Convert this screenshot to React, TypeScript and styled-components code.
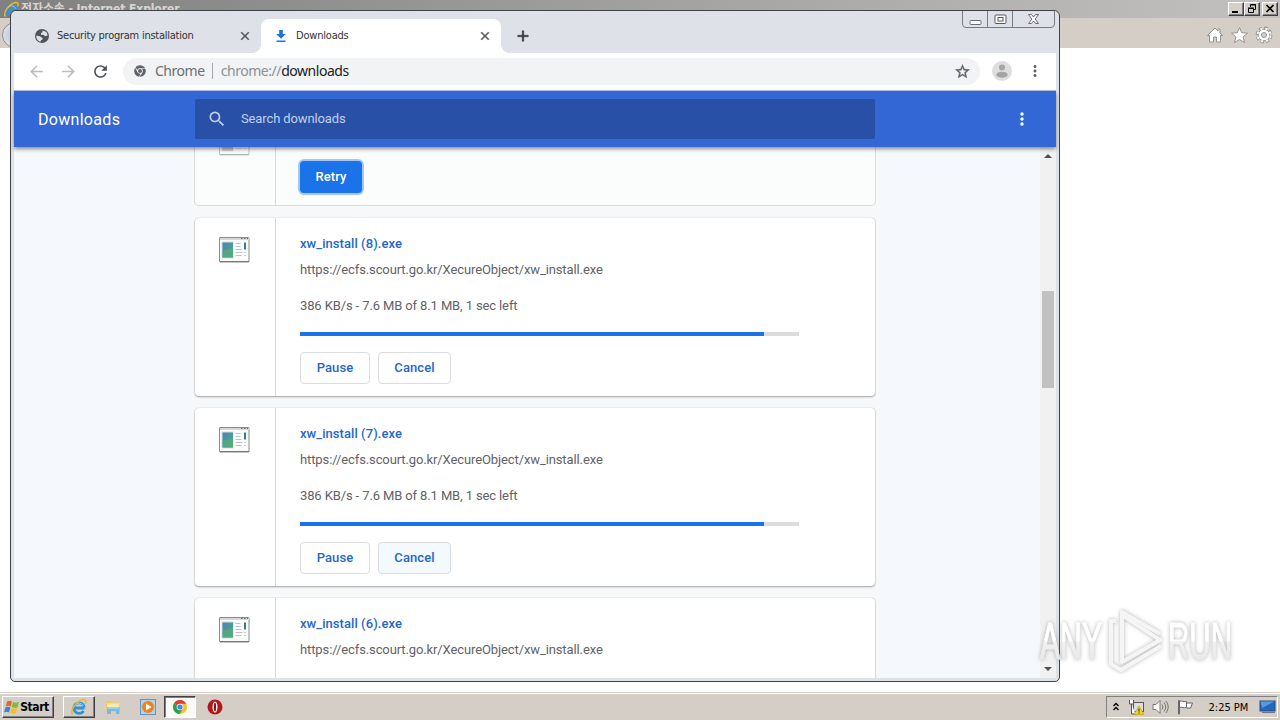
import React from 'react'
import styled, { createGlobalStyle, css } from 'styled-components'
import { FaChrome } from 'react-icons/fa'
import {
  MdAdd,
  MdArrowBack,
  MdArrowForward,
  MdClose,
  MdMoreVert,
  MdRefresh,
  MdSearch,
  MdStarBorder,
} from 'react-icons/md'

const GlobalStyle = createGlobalStyle`
  * { box-sizing: border-box; }
  body {
    margin: 0;
    overflow: hidden;
    font-family: Roboto, "Liberation Sans", sans-serif;
  }
  /* material icons carry an invisible bounding path */
  path[fill="none"] { stroke: none; }
`

const tahoma = '"DejaVu Sans Condensed", "DejaVu Sans", sans-serif'

const Desktop = styled.div`
  position: relative;
  width: 1280px;
  height: 720px;
  display: flex;
  flex-direction: column;
  overflow: hidden;
  background: #fff;
`

/* Internet Explorer, in the back */

const ExplorerTitle = styled.div`
  height: 18px;
  flex: none;
  display: flex;
  align-items: center;
  padding: 0 2px 0 3px;
  background: linear-gradient(90deg, #808080, #c2c1bf);
`

const ExplorerName = styled.span`
  flex: 1;
  margin-left: 1px;
  font: bold 12px/18px ${tahoma}, "Noto Sans CJK KR";
  letter-spacing: -0.1px;
  color: #d8d5cd;
  white-space: nowrap;
`

const ClassicButton = styled.div<{ $gap?: number }>`
  width: 16px;
  height: 14px;
  margin-left: ${({ $gap = 0 }) => $gap}px;
  background: #d4d0c8;
  border: 1px solid;
  border-color: #fff #404040 #404040 #fff;
  box-shadow: inset -1px -1px #808080;

  svg { display: block; }
`

const ExplorerBar = styled.div`
  height: 30px;
  flex: none;
  display: flex;
  align-items: center;
  justify-content: flex-end;
  gap: 6px;
  padding: 4px 7px 0 2px;
  background: #d4cec7;
`

const BackOrb = styled.div`
  width: 26px;
  height: 26px;
  margin-right: auto;
  border-radius: 50%;
  border: 1px solid #8b9097;
  background: radial-gradient(#b4c0cb, #e8edf2);
`

const ExplorerPage = styled.div`
  flex: 1;
  background: #fff;
`

/* Chrome window */

const Window = styled.div`
  position: absolute;
  left: 10px;
  top: 10px;
  width: 1050px;
  height: 672px;
  display: flex;
  flex-direction: column;
  padding: 0 3px 3px;
  border: 1px solid #404247;
  border-radius: 6px 6px 5px 5px;
  background: #dee1e6;
  overflow: hidden;
`

const TabStrip = styled.div`
  height: 42px;
  flex: none;
  display: flex;
  align-items: flex-end;
  padding-left: 7px;
  background: #dee1e8;
`

const TabBox = styled.div<{ $active?: boolean }>`
  position: relative;
  width: 240px;
  height: 34px;
  display: flex;
  align-items: center;
  padding: 0 9px 0 13px;
  border-radius: 8px 8px 0 0;
  font: 11px/14px ${tahoma};
  color: #303236;

  ${({ $active }) => $active && css`
    background: #fff;

    &::before,
    &::after {
      content: '';
      position: absolute;
      bottom: 0;
      width: 8px;
      height: 8px;
    }
    &::before {
      left: -8px;
      background: radial-gradient(circle at 0 0, transparent 7.5px, #fff 8px);
    }
    &::after {
      right: -8px;
      background: radial-gradient(circle at 100% 0, transparent 7.5px, #fff 8px);
    }
  `}
`

const TabTitle = styled.span<{ $spacing: number }>`
  flex: 1;
  margin: 0 0 0 7px;
  letter-spacing: ${({ $spacing }) => $spacing}px;
  white-space: nowrap;
`

const CloseIcon = styled(MdClose)`
  color: #55585c;
  stroke: currentColor;
  stroke-width: 0.8px;
`

const NewTab = styled.div`
  height: 34px;
  display: flex;
  align-items: center;
  margin-left: 13px;
  color: #35383c;

  svg {
    stroke: currentColor;
    stroke-width: 0.7px;
  }
`

const WindowButtons = styled.div`
  align-self: flex-start;
  display: flex;
  margin: -1px 1px 0 auto;
  height: 18px;
  border: 1px solid #777b83;
  border-radius: 0 0 4px 4px;
`

const WindowButton = styled.div<{ $width: number }>`
  width: ${({ $width }) => $width}px;
  display: flex;
  align-items: center;
  justify-content: center;

  & + & { border-left: 1px solid #777b83; }
`

const Toolbar = styled.div`
  height: 38px;
  flex: none;
  display: flex;
  align-items: center;
  padding: 0 12px 1px 13px;
  color: #5f6368;
  background: #fff;
  border-bottom: 1px solid #b6c6e6;
`

const NavButton = styled.div<{ $disabled?: boolean }>`
  width: 32px;
  display: flex;
  color: ${({ $disabled }) => ($disabled ? '#babcbe' : '#4c4f53')};
`

const Omnibox = styled.div`
  width: 858px;
  height: 27px;
  display: flex;
  align-items: center;
  padding: 0 9px 0 11px;
  border-radius: 14px;
  background: #f1f3f5;
  font: 14px/20px "Noto Sans", "Open Sans", sans-serif;

  > svg:last-child {
    stroke: currentColor;
    stroke-width: 0.5px;
  }
`

const OmniLabel = styled.span`
  margin-left: 9px;
  padding-right: 7px;
  border-right: 1px solid #a4a7aa;
  line-height: 16px;
  letter-spacing: -0.45px;
  color: #6b6f73;
`

const OmniUrl = styled.span`
  flex: 1;
  margin-left: 8px;
  letter-spacing: -0.45px;
  color: #8c9196;

  b {
    font-weight: 400;
    color: #202124;
  }
`

const Avatar = styled.div`
  display: flex;
  margin: 0 14px 0 12px;
`

/* Downloads page */

const PageHeader = styled.header`
  position: relative;
  z-index: 1;
  height: 56px;
  flex: none;
  display: flex;
  align-items: center;
  padding: 0 24px;
  background: #3367d6;
  color: #fff;
  box-shadow: 0 2px 4px rgba(0, 0, 0, 0.45);
`

const PageTitle = styled.h1`
  width: 157px;
  margin: 0;
  font-size: 16px;
  font-weight: 400;
  letter-spacing: 0.3px;
`

const SearchField = styled.div`
  width: 680px;
  height: 40px;
  display: flex;
  align-items: center;
  padding: 0 12px;
  border-radius: 2px;
  background: #2950a7;
  color: #c1cfee;
  font-size: 13px;
  letter-spacing: -0.12px;

  span { margin: 0 0 2px 14px; }
`

const HeaderMenu = styled.div`
  display: flex;
  margin-left: auto;
`

const PageBody = styled.div`
  flex: 1;
  min-height: 0;
  display: flex;
  justify-content: space-between;
  overflow: hidden;
  background: #f5f8fc;
`

const List = styled.main`
  width: 690px;
  margin: -36px 0 0 176px;
  padding: 0 5px;
  background: #f7f8f9;
`

const Card = styled.section<{ $stopped?: boolean }>`
  display: flex;
  height: ${({ $stopped }) => ($stopped ? 94 : 178)}px;
  margin-bottom: ${({ $stopped }) => ($stopped ? 13 : 12)}px;
  border-radius: 4px;
  background: ${({ $stopped }) => ($stopped ? '#fbfdfd' : '#fff')};
  box-shadow: ${({ $stopped }) => ($stopped
    ? '0 0 0 1px #d9dddd'
    : '0 1px 2px rgba(60, 64, 67, 0.45), 0 0 1px rgba(60, 64, 67, 0.35)')};
`

const CardIcon = styled.div<{ $faded?: boolean }>`
  width: 81px;
  padding: 19px 0 0 24px;
  border-right: 1px solid #d9dbdb;

  svg {
    display: block;
    opacity: ${({ $faded }) => ($faded ? 0.5 : 1)};
    filter: ${({ $faded }) => ($faded ? 'grayscale(1)' : 'none')};
  }
`

const CardContent = styled.div`
  display: flex;
  flex-direction: column;
  padding: 16px 0 12px 24px;
  font-size: 13px;
  line-height: 20px;
  color: #5f6368;
  white-space: nowrap;
`

const FileName = styled.div`
  font-weight: 500;
  letter-spacing: 0.06px;
  color: #2467cb;
`

const FileUrl = styled.div`
  margin-top: 6px;
  letter-spacing: -0.11px;
`

const Status = styled.div`
  margin-top: 16px;
  letter-spacing: -0.12px;
`

const Progress = styled.div`
  width: 499px;
  height: 4px;
  margin-top: 16px;
  background: #dcdcdc;
`

const ProgressFill = styled.div`
  height: 4px;
  background: #1a73e8;
`

const Actions = styled.div`
  display: flex;
  gap: 8px;
  margin-top: auto;
`

const Button = styled.button<{ $width: number; $primary?: boolean; $hover?: boolean }>`
  width: ${({ $width }) => $width}px;
  height: 32px;
  padding: 0 0 2px;
  border: 1px solid #dadce0;
  border-radius: 4px;
  background: ${({ $hover }) => ($hover ? '#f4f9fe' : '#fff')};
  color: #2467cb;
  font: 500 13px Roboto, sans-serif;
  letter-spacing: 0.1px;

  ${({ $primary }) => $primary && css`
    border: 0;
    background: #1a73e8;
    color: #fff;
    box-shadow: 0 0 0 2px #a3c7f6;
  `}
`

const ScrollTrack = styled.div`
  width: 16px;
  display: flex;
  flex-direction: column;
  align-items: center;
  padding: 7px 0;
  background: #f1f1f1;
`

const ScrollThumb = styled.div`
  width: 12px;
  height: 97px;
  margin: 133px 0 auto;
  background: #c1c1c1;
`

const ScrollArrow = styled.div<{ $down?: boolean }>`
  border: 4px solid transparent;
  border-top-width: ${({ $down }) => ($down ? 4 : 0)}px;
  border-bottom-width: ${({ $down }) => ($down ? 0 : 4)}px;
  border-top-color: #505050;
  border-bottom-color: #505050;
`

/* Taskbar */

const Taskbar = styled.footer`
  height: 28px;
  flex: none;
  display: flex;
  align-items: center;
  padding: 1px 2px 0;
  border-top: 1px solid #d4d0c8;
  background: #d4cec7;
  box-shadow: inset 0 1px #fff;
`

const TaskButton = styled.div<{ $width: number; $look?: 'raised' | 'pressed' }>`
  width: ${({ $width }) => $width}px;
  height: 22px;
  display: flex;
  align-items: center;
  justify-content: center;
  border: 1px solid transparent;

  ${({ $look }) => $look === 'raised' && css`
    border-color: #fff #404040 #404040 #fff;
    box-shadow: inset -1px -1px #808080;
  `}
  ${({ $look }) => $look === 'pressed' && css`
    border-color: #404040 #fff #fff #404040;
    box-shadow: inset 1px 1px #808080;
    background: #fbfaf9;
  `}
`

const StartButton = styled(TaskButton)`
  margin-right: 9px;
  padding-right: 3px;
  font: bold 12px ${tahoma};
  letter-spacing: -0.4px;
  color: #000;
`

const Tray = styled.div`
  height: 22px;
  width: 172px;
  display: flex;
  align-items: center;
  margin-left: auto;
  padding: 0 1px 0 5px;
  border: 1px solid;
  border-color: #808080 #fff #fff #808080;
`

const TrayIcons = styled.div`
  display: flex;
  align-items: center;
  gap: 7.5px;
`

const Clock = styled.span`
  flex: 1;
  margin-left: 16px;
  font: 11px ${tahoma};
  color: #000;
  white-space: nowrap;
`

const Watermark = styled.svg`
  position: absolute;
  left: 1030px;
  top: 602px;
  filter: drop-shadow(0 0 2px rgba(90, 90, 90, 0.45));
`

const ExplorerLogo = ({ size }: { size: number }) => (
  <svg width={size} height={size} viewBox="0 0 18 18" fill="none">
    <path d="M14.5 10H5.2M14.4 9.4A5.3 5.3 0 1 0 13.6 13" stroke="#2f93dc" strokeWidth="2.8" />
    <path d="M13.4 8A4.6 4.6 0 0 0 5 7.6" stroke="#8ad2fa" strokeWidth="1" />
    <path d="M2.8 16.3C-1 14 6 3.2 13 1.6c3.600-.6 3.600 2 2.300 4" stroke="#eab92c" strokeWidth="1.500" />
  </svg>
)

const GlobeIcon = () => (
  <svg width="16" height="16" viewBox="0 0 16 16">
    <circle cx="8" cy="8" r="7" fill="#505358" />
    <path d="M8.500 2.500l4 1.500 1.200 3.500-2.700.8-1.500-1.600-2.200.3-.5-1.800 1.700-.9z" fill="#dee1e8" />
    <path d="M2.300 7.500l3.500.7 2.700 1.700v1.600l-1.600.9-.4 1.400C4 13.200 2 10.500 2.300 7.500z" fill="#dee1e8" />
  </svg>
)

const DownloadIcon = () => (
  <svg width="15" height="16" viewBox="0 0 15 16" fill="#1a73e8">
    <path d="M5.200 2h3.600v4h3L7 10.800 2.200 6h3zM2.500 12.500h9V14h-9z" />
  </svg>
)

const ChromeLogo = () => (
  <svg width="16" height="16" viewBox="0 0 16 16">
    <circle cx="8" cy="8" r="7" fill="#fbc116" />
    <path d="M8 8L1.900 4.500A7 7 0 0 1 14.100 4.800H8z" fill="#df3b2e" />
    <path d="M8 8L1.900 4.500A7 7 0 0 0 7.500 15L11 9.700z" fill="#2da04d" />
    <circle cx="8" cy="8" r="3.300" fill="#fff" />
    <circle cx="8" cy="8" r="2.600" fill="#4285f4" />
  </svg>
)

const ProgramIcon = () => (
  <svg width="31" height="26" viewBox="0 0 31 26">
    <defs>
      <linearGradient id="pane" x1="0" y1="0" x2="1" y2="1">
        <stop offset="0" stopColor="#4a86b0" />
        <stop offset="1" stopColor="#4fa98c" />
      </linearGradient>
    </defs>
    <rect x="0.500" y="0.500" width="29.500" height="24.500" rx="0.500" fill="#fcfcfc" stroke="#8b8b8b" />
    <path d="M1 2h29" stroke="#d5d8d9" strokeWidth="2" />
    <path d="M1 24.500h29" stroke="#777" />
    <path d="M22 1.500h1.500M25 1.500h1.500M28 1.500h1" stroke="#666" />
    <rect x="2.500" y="4.500" width="12" height="17" fill="#d3dcdf" />
    <rect x="3.500" y="5.500" width="10.500" height="15" fill="url(#pane)" />
    <path d="M3.500 15c3-4 7-1 10.500-5v10.500H3.500z" fill="#58ac79" opacity="0.700" />
    <path d="M16.500 6.500h5M16.500 9.500h5M16.500 12.500h6M16.500 15.500h7M16.500 18.500h6" stroke="#bfc2c2" />
    <path d="M25 5.500h2v7h-2z" fill="#347f83" />
    <path d="M25 15.500h2M25 18.500h2" stroke="#ccc" />
  </svg>
)

const Tab = ({ title, icon, spacing = 0, active }: {
  title: string
  icon: React.ReactNode
  spacing?: number
  active?: boolean
}) => (
  <TabBox $active={active}>
    {icon}
    <TabTitle $spacing={spacing}>{title}</TabTitle>
    <CloseIcon size={14} />
  </TabBox>
)

type DownloadItem = {
  id: number
  percent?: number
  cancelHover?: boolean
}

const downloads: DownloadItem[] = [
  { id: 8, percent: 93 },
  { id: 7, percent: 93, cancelHover: true },
  { id: 6 },
]

const Download = ({ id, percent, cancelHover }: DownloadItem) => (
  <Card>
    <CardIcon><ProgramIcon /></CardIcon>
    <CardContent>
      <FileName>xw_install ({id}).exe</FileName>
      <FileUrl>https://ecfs.scourt.go.kr/XecureObject/xw_install.exe</FileUrl>
      {percent && (
        <>
          <Status>386 KB/s - 7.6 MB of 8.1 MB, 1 sec left</Status>
          <Progress><ProgressFill style={{ width: `${percent}%` }} /></Progress>
          <Actions>
            <Button $width={70}>Pause</Button>
            <Button $width={73} $hover={cancelHover}>Cancel</Button>
          </Actions>
        </>
      )}
    </CardContent>
  </Card>
)

const Explorer = () => (
  <>
    <ExplorerTitle>
      <ExplorerLogo size={17} />
      <ExplorerName>전자소송 - Internet Explorer</ExplorerName>
      <ClassicButton>
        <svg width="14" height="12"><path d="M3 9h6" stroke="#000" strokeWidth="2" /></svg>
      </ClassicButton>
      <ClassicButton>
        <svg width="14" height="12" fill="none" stroke="#000">
          <path d="M5.500 4V1.500h5v5H9M5 2h6M3.500 5.500h5v4h-5zM3 5h6" />
        </svg>
      </ClassicButton>
      <ClassicButton $gap={2}>
        <svg width="14" height="12"><path d="M3.500 2l7 7M10.500 2l-7 7" stroke="#000" strokeWidth="1.700" /></svg>
      </ClassicButton>
    </ExplorerTitle>
    <ExplorerBar>
      <BackOrb />
      <svg width="18" height="18" viewBox="0 0 18 18" fill="#fff" stroke="#97938e">
        <path d="M9 2L1.500 9.500h2V16h4v-5h3v5h4V9.500h2L14 7V3h-2v2z" />
      </svg>
      <svg width="19" height="18" viewBox="0 0 19 18" fill="#fff" stroke="#97938e">
        <path d="M9.500 1.500l2.200 5.200 5.800.5-4.400 3.700 1.400 5.600-5-3-5 3 1.400-5.600L1.500 7.200l5.800-.5z" />
      </svg>
      <svg width="18" height="18" viewBox="0 0 18 18" fill="none">
        <circle cx="9" cy="9" r="6.900" stroke="#97938e" strokeWidth="3" strokeDasharray="3.400 2.020" />
        <circle cx="9" cy="9" r="5.800" fill="#fff" stroke="#97938e" />
        <circle cx="9" cy="9" r="6.500" stroke="#fff" strokeWidth="2" strokeDasharray="2.100 3.005" strokeDashoffset="-0.550" />
        <circle cx="9" cy="9" r="2.500" fill="#d4cec7" stroke="#97938e" />
      </svg>
    </ExplorerBar>
    <ExplorerPage />
  </>
)

const ChromeWindow = () => (
  <Window>
    <TabStrip>
      <Tab title="Security program installation" icon={<GlobeIcon />} spacing={-0.25} />
      <Tab title="Downloads" icon={<DownloadIcon />} spacing={-0.2} active />
      <NewTab><MdAdd size={18} /></NewTab>
      <WindowButtons>
        <WindowButton $width={24}>
          <svg width="13" height="16"><rect x="1" y="9.500" width="11" height="4" rx="1" fill="#fff" stroke="#6b6e76" /></svg>
        </WindowButton>
        <WindowButton $width={25}>
          <svg width="13" height="16" fill="#fff" stroke="#565961">
            <rect x="1" y="4" width="11" height="8.500" rx="1" />
            <rect x="4" y="6.500" width="5" height="3.500" />
          </svg>
        </WindowButton>
        <WindowButton $width={42}>
          <svg width="13" height="16" fill="#fff" stroke="#6b6e76">
            <path d="M1.500 3.500h3l2 2.500 2-2.500h3L8.200 8l3.300 4.500h-3l-2-2.500-2 2.500h-3L4.800 8z" />
          </svg>
        </WindowButton>
      </WindowButtons>
    </TabStrip>
    <Toolbar>
      <NavButton $disabled><MdArrowBack size={19} /></NavButton>
      <NavButton $disabled><MdArrowForward size={19} /></NavButton>
      <NavButton><MdRefresh size={19} /></NavButton>
      <Omnibox>
        <FaChrome size={12} />
        <OmniLabel>Chrome</OmniLabel>
        <OmniUrl>chrome://<b>downloads</b></OmniUrl>
        <MdStarBorder size={17} />
      </Omnibox>
      <Avatar>
        <svg width="20" height="20" viewBox="0 0 20 20">
          <circle cx="10" cy="10" r="10" fill="#dedede" />
          <circle cx="10" cy="6.500" r="3" fill="#a5a5a5" />
          <ellipse cx="10" cy="13.700" rx="5.700" ry="3" fill="#a5a5a5" />
        </svg>
      </Avatar>
      <MdMoreVert size={18} />
    </Toolbar>
    <PageHeader>
      <PageTitle>Downloads</PageTitle>
      <SearchField>
        <MdSearch size={20} />
        <span>Search downloads</span>
      </SearchField>
      <HeaderMenu><MdMoreVert size={20} /></HeaderMenu>
    </PageHeader>
    <PageBody>
      <List>
        <Card $stopped>
          <CardIcon $faded><ProgramIcon /></CardIcon>
          <CardContent>
            <Actions><Button $width={62} $primary>Retry</Button></Actions>
          </CardContent>
        </Card>
        {downloads.map((item) => <Download key={item.id} {...item} />)}
      </List>
      <ScrollTrack>
        <ScrollArrow />
        <ScrollThumb />
        <ScrollArrow $down />
      </ScrollTrack>
    </PageBody>
  </Window>
)

const App = (): JSX.Element => (
  <Desktop>
    <GlobalStyle />
    <Explorer />
    <Taskbar>
      <StartButton $width={52} $look="raised">
        <svg width="16" height="16" viewBox="0 0 16 16">
          <path d="M3 2.500c2-1.300 3.500-1 5 0L6.700 7.500c-1.700-1-3.200-1-5 0z" fill="#e2652c" />
          <path d="M9 3c2 1 4 1 6-.3L13.600 8c-2 1.200-4 1-6 0z" fill="#7db93c" />
          <path d="M1.400 8.500c2-1.200 3.400-1 5 0L5 13.500c-1.700-1-3.200-1-5 0z" fill="#3f83d0" />
          <path d="M7.300 9c2 1 4 1 6-.2L12 14c-2 1.200-4 1-6 0z" fill="#f4bf2d" />
        </svg>
        Start
      </StartButton>
      <TaskButton $width={32} $look="raised"><ExplorerLogo size={18} /></TaskButton>
      <TaskButton $width={36}>
        <svg width="16" height="16" viewBox="0 0 16 16">
          <path d="M1 2h5l1 1.500h7V13H1z" fill="#ecca67" />
          <path d="M2 4.500h12V9H2z" fill="#f9eca9" />
          <path d="M2 8h12.500v7H11v-3H6v3H2z" fill="#78bbe2" />
          <path d="M2.500 9h11" stroke="#c8e9f8" />
        </svg>
      </TaskButton>
      <TaskButton $width={33}>
        <svg width="16" height="16" viewBox="0 0 16 16">
          <rect x="0.500" y="0.500" width="15" height="15" fill="#b3d3ed" stroke="#5f94c4" />
          <circle cx="8" cy="8" r="6" fill="#ee8220" />
          <path d="M6 4.500l5.500 3.500L6 11.500z" fill="#fff" />
        </svg>
      </TaskButton>
      <TaskButton $width={32} $look="pressed"><ChromeLogo /></TaskButton>
      <TaskButton $width={37}>
        <svg width="16" height="16" viewBox="0 0 16 16">
          <circle cx="8" cy="8" r="7.500" fill="#b5161b" />
          <ellipse cx="8" cy="8" rx="2.500" ry="5.500" fill="#fff" />
          <ellipse cx="8" cy="8" rx="1.100" ry="4.500" fill="#8c1014" />
        </svg>
      </TaskButton>
      <Tray>
        <TrayIcons>
          <svg width="8" height="10" fill="none" stroke="#000" strokeWidth="1.300">
            <path d="M1.500 4L4 1.500 6.500 4M1.500 8L4 5.500 6.500 8" />
          </svg>
          <svg width="17" height="16" viewBox="0 0 17 16">
            <rect x="5.500" y="3.500" width="10" height="9" fill="#dedede" stroke="#555" />
            <path d="M1.500 1v4h4V1M3.500 5v10h4" fill="#fff" stroke="#555" />
            <path d="M11 7l5 8.500H6z" fill="#f4d126" stroke="#b79711" strokeWidth="0.600" />
            <path d="M11 9.500v3M11 13.500v1" stroke="#222" />
          </svg>
          <svg width="17" height="16" viewBox="0 0 17 16" fill="none" stroke="#777">
            <path d="M1 5.500h3L8 1.500v13l-4-4H1z" fill="#fff" />
            <path d="M10 5.500q2 2.500 0 5M12 3.500q3.500 4.500 0 9M14 2q4.500 6 0 12" />
          </svg>
          <svg width="16" height="16" viewBox="0 0 16 16" fill="#fff" stroke="#666">
            <path d="M1.500 15V1.500h1V15zM2.500 2.500c3-1.500 3 1 7 0v6c-3 1-4-1-7 0zM9.500 4h6l-2 5h-4" />
          </svg>
        </TrayIcons>
        <Clock>2:25 PM</Clock>
        <svg width="17" height="16" viewBox="0 0 17 16">
          <rect x="1" y="2" width="15" height="10" fill="#2567bb" stroke="#234f87" />
          <path d="M1.500 2.500h14L3 9z" fill="#589ae0" />
          <path d="M3 13.500h13" stroke="#6c7684" />
        </svg>
      </Tray>
    </Taskbar>
    <ChromeWindow />
    <Watermark width="230" height="78" viewBox="0 0 230 78">
      <defs>
        <linearGradient id="mark" gradientUnits="userSpaceOnUse" x1="0" y1="20" x2="0" y2="58">
          <stop offset="0.500" stopColor="#fff" />
          <stop offset="0.520" stopColor="#f2f2f2" />
          <stop offset="1" stopColor="#e8e8e8" />
        </linearGradient>
      </defs>
      <g
        fill="url(#mark)"
        stroke="url(#mark)"
        strokeWidth="1.200"
        fontFamily="'Liberation Sans', sans-serif"
        fontSize="51"
      >
        <text x="10" y="57" textLength="62" lengthAdjust="spacingAndGlyphs">ANY</text>
        <text x="138" y="57" textLength="64" lengthAdjust="spacingAndGlyphs">RUN</text>
      </g>
      <g fill="none" stroke="#f5f5f5" strokeWidth="4" strokeLinejoin="round">
        <path d="M92 13v47l38-22z" />
        <path d="M130 32L92 10v12M86 19h-5v43l10 6 40-24" />
      </g>
    </Watermark>
  </Desktop>
)

export default App
